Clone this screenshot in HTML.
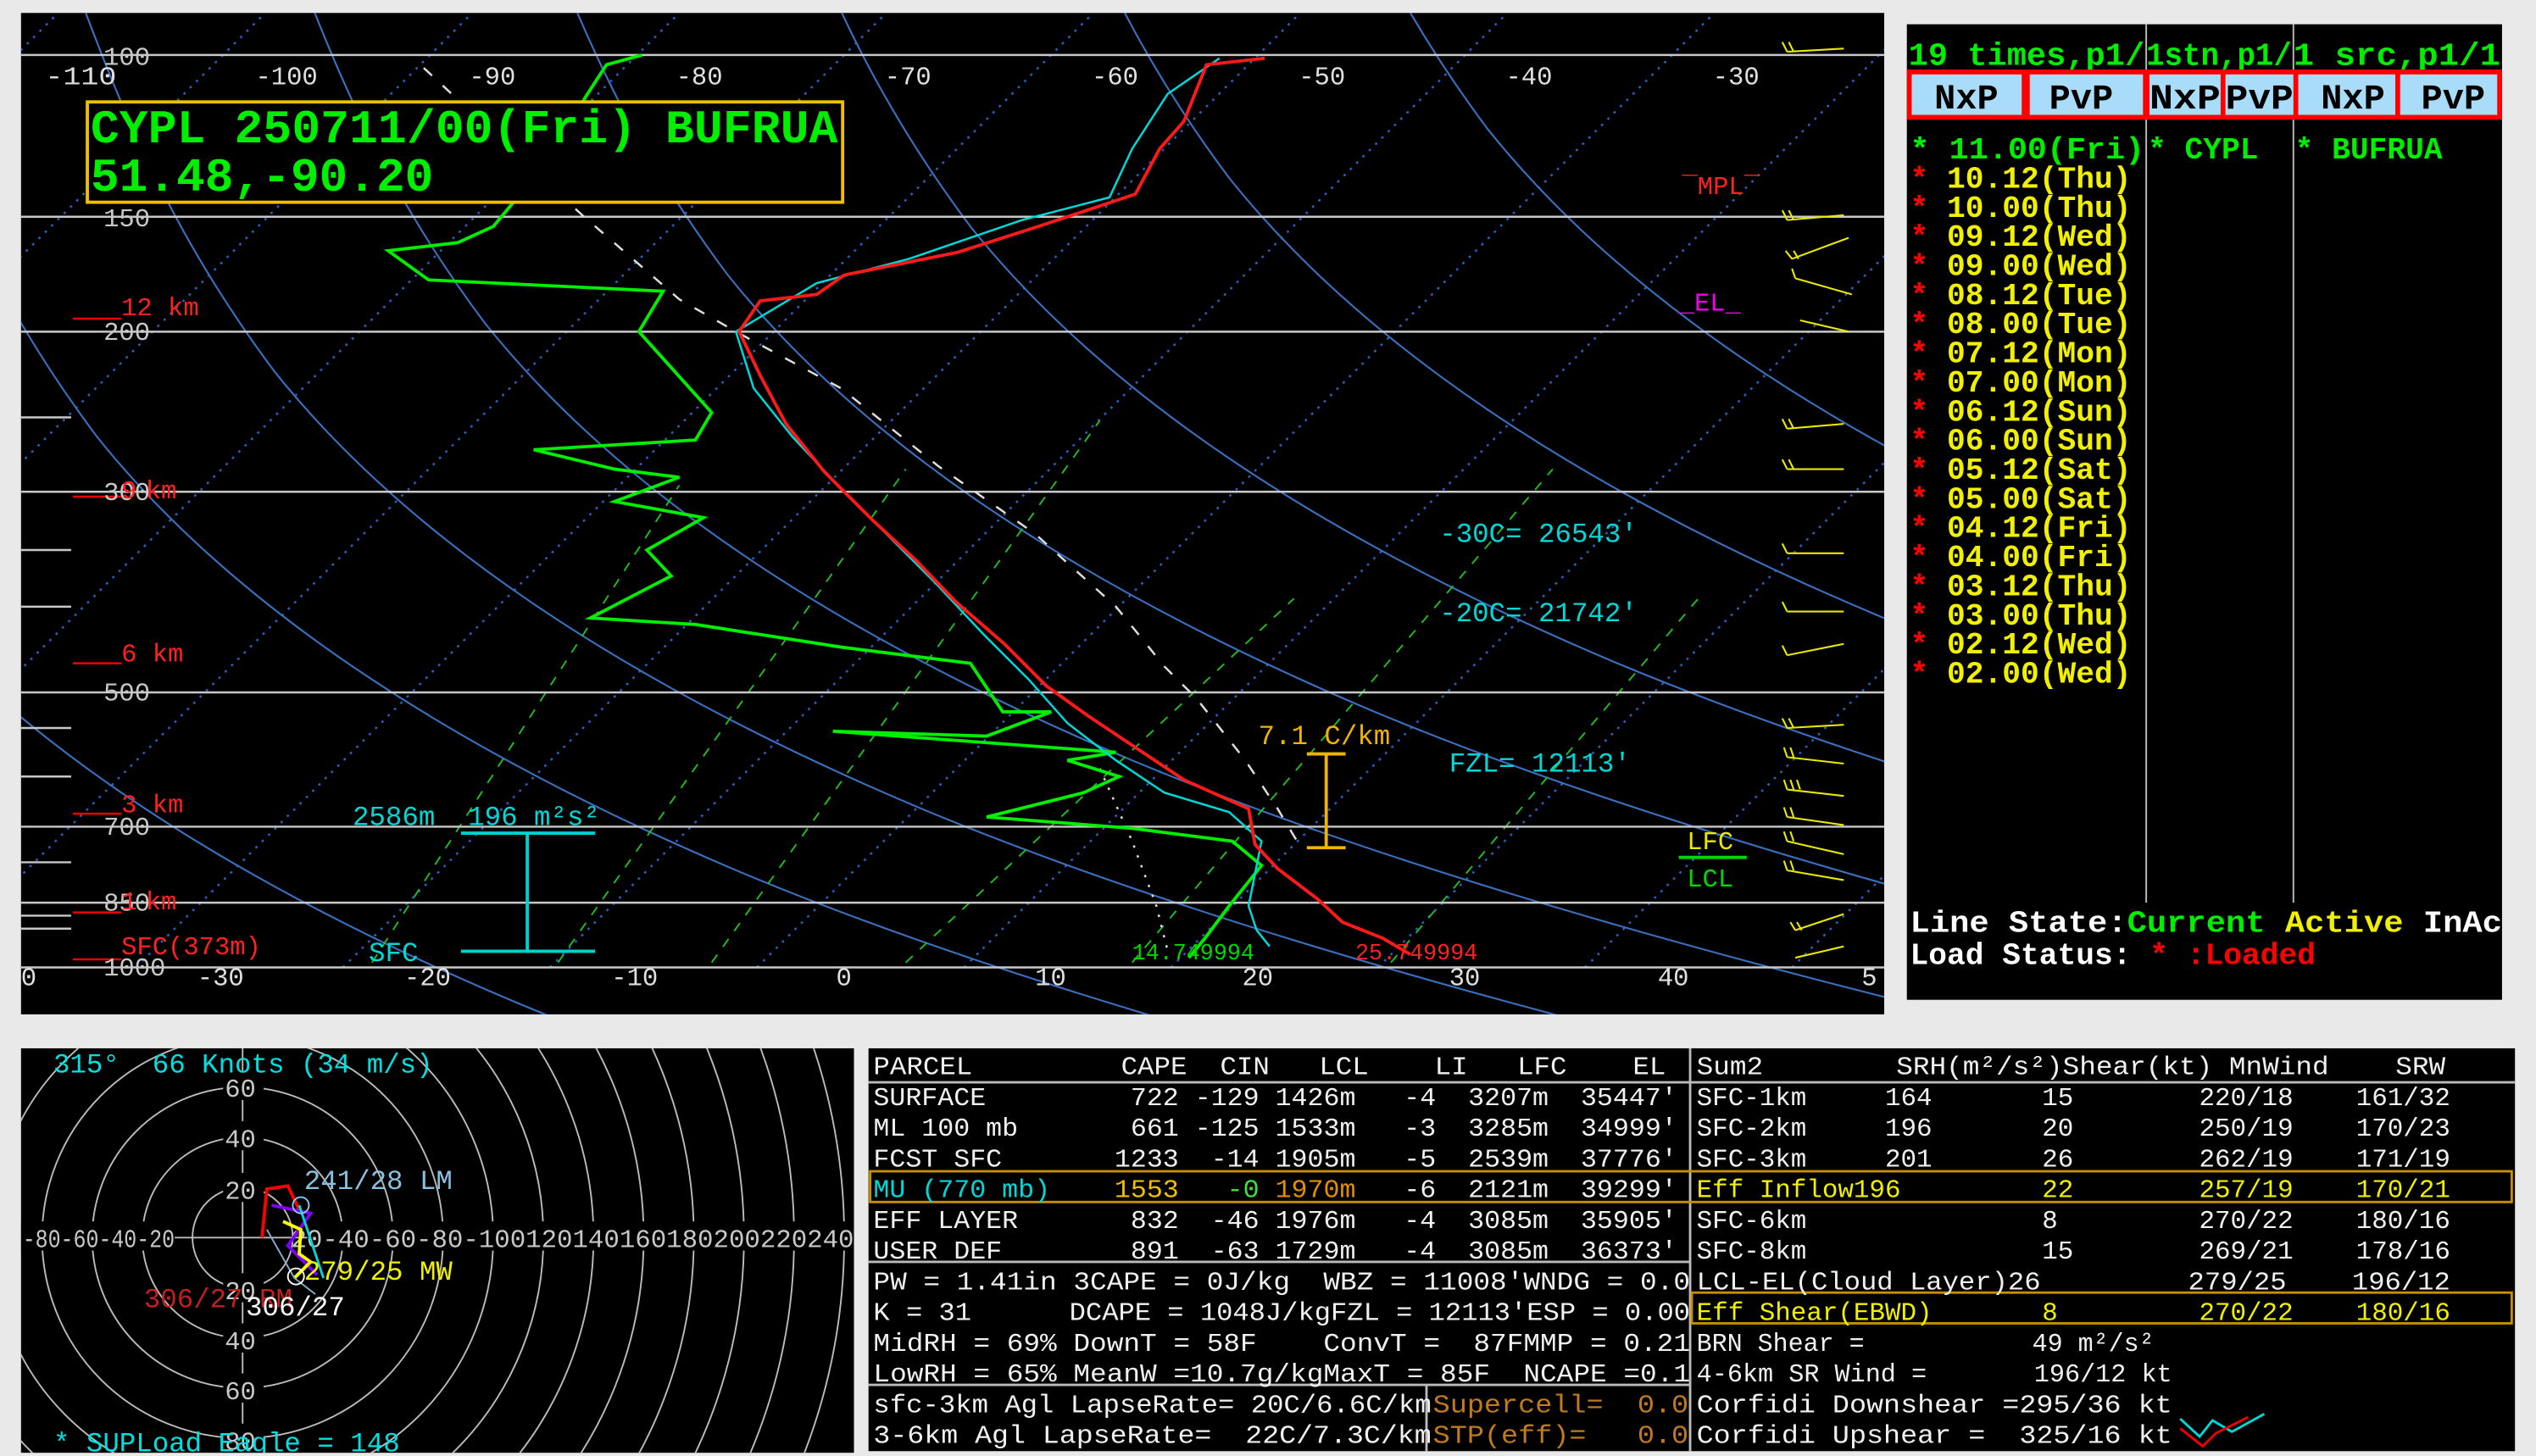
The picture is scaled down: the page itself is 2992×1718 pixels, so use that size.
<!DOCTYPE html>
<html><head><meta charset="utf-8"><style>
html,body{margin:0;padding:0;background:#e9e9e9;width:2992px;height:1718px;overflow:hidden;}
svg{display:block}
text{font-family:"Liberation Mono","DejaVu Sans Mono",monospace;white-space:pre;}
.c{font-family:"DejaVu Sans Mono","Liberation Mono",monospace;}
</style></head><body>
<svg width="2992" height="1718" viewBox="0 0 1568 900" preserveAspectRatio="none" xmlns="http://www.w3.org/2000/svg" xml:space="preserve">
<defs>
<clipPath id="sk"><rect x="13" y="8" width="1152" height="619"/></clipPath>
<clipPath id="hd"><rect x="13" y="648" width="515" height="250"/></clipPath>
<path id="ad" d="M0 0C30 80 60 150 120 230C200 330 330 420 520 500C640 550 800 600 1000 650" fill="none"/>
</defs>
<rect width="1568" height="900" fill="#e9e9e9"/>
<rect x="13" y="8" width="1152" height="619" fill="#000"/>
<g clip-path="url(#sk)">
 <g stroke="#2a5fc0" stroke-width="1.3" stroke-dasharray="1.5 4" fill="none">
  <path d="M-300 598L300 0M-172 598L428 0M-44 598L556 0M84 598L684 0M212 598L812 0M340 598L940 0M468 598L1068 0M596 598L1196 0M724 598L1324 0M852 598L1452 0M980 598L1580 0M1108 598L1708 0M1236 598L1836 0M-428 598L172 0M-556 598L44 0M-684 598L-84 0"/>
 </g>
 <g stroke="#3a70c0" stroke-width="1.1">
  <use href="#ad" x="-330" y="220"/>
  <use href="#ad" x="-200" y="120"/>
  <use href="#ad" x="-60" y="40"/>
  <use href="#ad" x="50" y="0"/>
  <use href="#ad" x="180" y="-30"/>
  <use href="#ad" x="330" y="-60"/>
  <use href="#ad" x="480" y="-90"/>
  <use href="#ad" x="640" y="-120"/>
  <use href="#ad" x="800" y="-150"/>
 </g>
 <g stroke="#1fbf1f" stroke-width="1" stroke-dasharray="6 6" fill="none">
  <path d="M230 595L420 300M345 595L560 290M440 595L680 260M560 595L800 370M700 595L960 290M860 595L1050 370"/>
 </g>
 <g stroke="#c8c8c8" stroke-width="1.3">
  <path d="M13 34H1165M13 134H1165M13 205H1165M13 304H1165M13 428H1165M13 511H1165M13 558H1165M13 598H1165"/>
  <path d="M13 258H44M13 340H44M13 375H44M13 450H44M13 480H44M13 533H44M13 574H44M13 566H44"/>
 </g>
 <g stroke="#e00" stroke-width="1.3"><path d="M45 197H75M45 307H75M45 410H75M45 503H75M45 564H75M45 593H75"/></g>
 <path d="M262 42L360 133L420 185L455 205L520 240L580 288L640 330L690 375L720 412L740 432L770 470L790 500L802 520" stroke="#ddd" stroke-width="1.3" fill="none" stroke-dasharray="7 9"/>
 <path d="M680 475L700 520L715 560L722 588" stroke="#ddd" stroke-width="1.3" fill="none" stroke-dasharray="1.5 5"/>
 <path d="M397 34L375 40L362 60L345 90L330 110L305 140L283 150L240 155L265 173L410 180L395 205L440 255L430 272L330 278L380 290L420 295L380 310L435 320L400 340L415 356L365 382L430 386L520 400L600 410L620 440L650 440L610 455L515 452L690 465L660 470L692 480L670 490L610 505L700 512L762 520L780 535L760 560L745 580L735 592" stroke="#00ee00" stroke-width="2" fill="none"/>
 <path d="M754 36L722 58L700 92L686 122L632 136L562 160L505 175L455 205L466 240L490 270L520 302L548 330L578 360L608 392L636 420L660 447L690 470L720 490L760 502L780 520L772 560L777 575L785 585" stroke="#00d8d8" stroke-width="1.3" fill="none"/>
 <path d="M782 36L746 40L732 75L717 92L702 120L642 140L592 156L522 170L505 182L470 186L457 205L470 232L486 262L510 292L540 322L566 346L591 372L621 398L647 424L672 442L702 462L732 482L772 500L776 522L790 537L815 556L830 570L855 580L872 590" stroke="#ff1a1a" stroke-width="2" fill="none"/>
 <g stroke="#e8e800" stroke-width="1.1" fill="none">
  <path d="M1105 32L1140 30M1105 32l-3-6M1109 32l-3-6"/>
  <path d="M1105 136L1140 133M1105 136l-3-6M1109 136l-3-6"/>
  <path d="M1108 160L1143 147M1108 160l-4-5M1112 160l-3-5"/>
  <path d="M1110 172L1145 182M1110 172l-2-6"/>
  <path d="M1113 198L1143 205"/>
  <path d="M1105 265L1140 262M1105 265l-3-6M1109 265l-3-6"/>
  <path d="M1105 290L1140 290M1105 290l-3-6M1109 290l-3-6"/>
  <path d="M1105 342L1140 342M1105 342l-3-6"/>
  <path d="M1105 378L1140 378M1105 378l-3-6"/>
  <path d="M1105 405L1140 398M1105 405l-3-6"/>
  <path d="M1105 450L1140 448M1105 450l-3-6M1109 450l-3-6"/>
  <path d="M1105 468L1140 472M1105 468l-2-6M1109 468l-2-6"/>
  <path d="M1105 488L1140 492M1105 488l-2-6M1109 488l-2-6M1113 488l-2-6"/>
  <path d="M1105 505L1140 510M1105 505l-2-6M1109 505l-2-6"/>
  <path d="M1105 520L1140 528M1105 520l-2-6M1109 520l-2-6"/>
  <path d="M1105 538L1140 544M1105 538l-2-6M1109 538l-2-6"/>
  <path d="M1110 575L1140 565M1110 575l-3-5M1114 575l-3-5"/>
  <path d="M1110 592L1140 585"/>
 </g>
 <path d="M808 466H832M820 466V524M808 524H832" stroke="#f0b400" stroke-width="2"/>
 <path d="M285 515H368M326 515V588M285 588H368" stroke="#00d0d0" stroke-width="2"/>
</g>
<g fill="#e0e0e0" font-size="16">
 <text x="28" y="52" textLength="44" lengthAdjust="spacingAndGlyphs">-110</text>
 <text x="158" y="52">-100</text><text x="290" y="52">-90</text><text x="418" y="52">-80</text><text x="547" y="52">-70</text><text x="675" y="52">-60</text><text x="803" y="52">-50</text><text x="931" y="52">-40</text><text x="1059" y="52">-30</text>
 <text x="122" y="609">-30</text><text x="250" y="609">-20</text><text x="378" y="609">-10</text><text x="517" y="609">0</text><text x="640" y="609">10</text><text x="768" y="609">20</text><text x="896" y="609">30</text><text x="1025" y="609">40</text><text x="1151" y="609">5</text><text x="13" y="609">0</text>
 <g fill="#c8c8c8"><text x="64" y="40">100</text><text x="64" y="140">150</text><text x="64" y="210">200</text><text x="64" y="309">300</text><text x="64" y="433">500</text><text x="64" y="516">700</text><text x="64" y="563">850</text><text x="64" y="603">1000</text></g>
</g>
<g fill="#ff2020" font-size="16">
 <text x="75" y="195">12 km</text><text x="75" y="308">9</text><text x="90" y="308">km</text><text x="75" y="409">6 km</text><text x="75" y="502">3 km</text><text x="75" y="562">1</text><text x="90" y="562">km</text><text x="75" y="590">SFC(373m)</text>
 <text x="1040" y="120">‾MPL‾</text>
 <text x="838" y="593" font-size="14">25.749994</text>
</g>
<text x="1038" y="192" fill="#ee00ee" font-size="16">_EL_</text>
<g fill="#00d8d8" font-size="17">
 <text x="890" y="335">-30C= 26543'</text><text x="890" y="384">-20C= 21742'</text><text x="896" y="477">FZL= 12113'</text>
 <text x="218" y="510">2586m  196 m²s²</text><text x="228" y="594">SFC</text>
</g>
<text x="778" y="460" fill="#f0b400" font-size="17">7.1 C/km</text>
<text x="700" y="593" fill="#00d800" font-size="14">14.749994</text>
<text x="1043" y="525" fill="#e8e800" font-size="16">LFC</text>
<path d="M1038 530H1080" stroke="#00d800" stroke-width="2"/>
<text x="1043" y="548" fill="#00d800" font-size="16">LCL</text>
<rect x="54" y="63" width="467" height="62" fill="#000" stroke="#f0c000" stroke-width="2"/>
<g fill="#00ee00" font-size="29" font-weight="bold">
 <text x="56" y="88" textLength="462" lengthAdjust="spacingAndGlyphs">CYPL 250711/00(Fri) BUFRUA</text>
 <text x="56" y="118" textLength="212" lengthAdjust="spacingAndGlyphs">51.48,-90.20</text>
</g>
<rect x="1179" y="15" width="368" height="603" fill="#000"/>
<path d="M1327 15V558M1418 15V558" stroke="#bbb" stroke-width="1"/>
<g fill="#00ee00" font-size="20" font-weight="bold">
 <text x="1180" y="40" textLength="146" lengthAdjust="spacingAndGlyphs">19 times,p1/</text>
 <text x="1327" y="40" textLength="90" lengthAdjust="spacingAndGlyphs">1stn,p1/</text>
 <text x="1418" y="40" textLength="128" lengthAdjust="spacingAndGlyphs">1 src,p1/1</text>
</g>
<rect x="1179" y="43" width="368" height="31" fill="#f00"/>
<g fill="#a8dcf8">
 <rect x="1182" y="46" width="68" height="25"/><rect x="1255" y="46" width="70" height="25"/>
 <rect x="1329" y="46" width="44" height="25"/><rect x="1376" y="46" width="42" height="25"/>
 <rect x="1421" y="46" width="60" height="25"/><rect x="1484" y="46" width="60" height="25"/>
</g>
<g fill="#000" font-size="22" font-weight="bold">
 <text x="1196" y="67">NxP</text><text x="1267" y="67">PvP</text><text x="1329" y="67" textLength="44" lengthAdjust="spacingAndGlyphs">NxP</text><text x="1376" y="67" textLength="42" lengthAdjust="spacingAndGlyphs">PvP</text><text x="1435" y="67">NxP</text><text x="1497" y="67">PvP</text>
</g>
<g font-size="19" font-weight="bold">
 <text x="1181" y="98" fill="#00ee00" textLength="145" lengthAdjust="spacingAndGlyphs">* 11.00(Fri)</text>
 <text x="1328" y="98" fill="#00ee00">* CYPL</text>
 <text x="1419" y="98" fill="#00ee00">* BUFRUA</text>
</g>
<g font-size="19" font-weight="bold" fill="#f0f000">
 <text x="1181" y="116"><tspan fill="#f00">*</tspan> 10.12(Thu)</text>
 <text x="1181" y="134"><tspan fill="#f00">*</tspan> 10.00(Thu)</text>
 <text x="1181" y="152"><tspan fill="#f00">*</tspan> 09.12(Wed)</text>
 <text x="1181" y="170"><tspan fill="#f00">*</tspan> 09.00(Wed)</text>
 <text x="1181" y="188"><tspan fill="#f00">*</tspan> 08.12(Tue)</text>
 <text x="1181" y="206"><tspan fill="#f00">*</tspan> 08.00(Tue)</text>
 <text x="1181" y="224"><tspan fill="#f00">*</tspan> 07.12(Mon)</text>
 <text x="1181" y="242"><tspan fill="#f00">*</tspan> 07.00(Mon)</text>
 <text x="1181" y="260"><tspan fill="#f00">*</tspan> 06.12(Sun)</text>
 <text x="1181" y="278"><tspan fill="#f00">*</tspan> 06.00(Sun)</text>
 <text x="1181" y="296"><tspan fill="#f00">*</tspan> 05.12(Sat)</text>
 <text x="1181" y="314"><tspan fill="#f00">*</tspan> 05.00(Sat)</text>
 <text x="1181" y="332"><tspan fill="#f00">*</tspan> 04.12(Fri)</text>
 <text x="1181" y="350"><tspan fill="#f00">*</tspan> 04.00(Fri)</text>
 <text x="1181" y="368"><tspan fill="#f00">*</tspan> 03.12(Thu)</text>
 <text x="1181" y="386"><tspan fill="#f00">*</tspan> 03.00(Thu)</text>
 <text x="1181" y="404"><tspan fill="#f00">*</tspan> 02.12(Wed)</text>
 <text x="1181" y="422"><tspan fill="#f00">*</tspan> 02.00(Wed)</text>
</g>
<g font-size="19" font-weight="bold">
 <text x="1181" y="576" fill="#fff" textLength="366" lengthAdjust="spacingAndGlyphs">Line State:<tspan fill="#00ee00">Current</tspan> <tspan fill="#f0f000">Active</tspan> InAc</text>
 <text x="1181" y="596" fill="#fff">Load Status: <tspan fill="#f00">* :Loaded</tspan></text>
</g>
<rect x="13" y="648" width="515" height="250" fill="#000"/>
<g clip-path="url(#hd)">
 <g stroke="#bbb" stroke-width="1" fill="none">
  <circle cx="150" cy="765" r="31"/><circle cx="150" cy="765" r="62"/><circle cx="150" cy="765" r="93"/><circle cx="150" cy="765" r="124"/><circle cx="150" cy="765" r="155"/><circle cx="150" cy="765" r="186"/><circle cx="150" cy="765" r="217"/><circle cx="150" cy="765" r="248"/><circle cx="150" cy="765" r="279"/><circle cx="150" cy="765" r="310"/><circle cx="150" cy="765" r="341"/><circle cx="150" cy="765" r="372"/><circle cx="150" cy="765" r="403"/>
  <path d="M13 765H528M150 648V898"/>
 </g>
 <g fill="#c8c8c8" font-size="16" class="c">
  <rect x="138" y="662" width="25" height="18" fill="#000"/><text x="139" y="678">60</text>
  <rect x="138" y="693" width="25" height="18" fill="#000"/><text x="139" y="709">40</text>
  <rect x="138" y="725" width="25" height="18" fill="#000"/><text x="139" y="741">20</text>
  <rect x="138" y="787" width="25" height="18" fill="#000"/><text x="139" y="803">20</text>
  <rect x="138" y="818" width="25" height="18" fill="#000"/><text x="139" y="834">40</text>
  <rect x="138" y="849" width="25" height="18" fill="#000"/><text x="139" y="865">60</text>
  <rect x="138" y="880" width="25" height="18" fill="#000"/><text x="139" y="896">80</text>
  <rect x="13" y="755" width="95" height="18" fill="#000"/><text x="14" y="771" textLength="94" lengthAdjust="spacingAndGlyphs">-80-60-40-20</text>
  <rect x="190" y="755" width="338" height="18" fill="#000"/><text x="180" y="771" textLength="348" lengthAdjust="spacingAndGlyphs">20-40-60-80-100120140160180200220240</text>
 </g>
 <path d="M162 765L165 735L178 733L186 750" stroke="#f00" stroke-width="2" fill="none"/>
 <path d="M168 745L192 750L178 770L196 788" stroke="#8000ff" stroke-width="2" fill="none"/>
 <path d="M175 755L186 760L185 775L192 780L182 790" stroke="#ff0" stroke-width="2" fill="none"/>
 <path d="M185 745L200 790" stroke="#00d8d8" stroke-width="1.5" fill="none"/>
 <path d="M165 760L182 790L195 800" stroke="#8ac" stroke-width="1" fill="none"/>
 <circle cx="186" cy="745" r="5" stroke="#8cf" fill="none"/><circle cx="183" cy="789" r="5" stroke="#fff" fill="none"/>
 <g font-size="17" class="c">
  <text x="33" y="663" fill="#00e0e0">315°  66 Knots (34 m/s)</text>
  <text x="188" y="735" fill="#88c0e0">241/28 LM</text>
  <text x="188" y="791" fill="#f0f000">279/25 MW</text>
  <text x="89" y="808" fill="#c02020">306/27 RM</text>
  <text x="152" y="813" fill="#fff">306/27</text>
  <text x="33" y="897" fill="#00e0e0">* SUPLoad Eagle = 148</text>
 </g>
</g>
<rect x="537" y="648" width="1018" height="249" fill="#000"/>
<g stroke="#bbb" stroke-width="1.5" fill="none">
 <path d="M537 669H1555M537 780H1045M537 856H1045M1045 648V897M882 856V897"/>
</g>
<rect x="538" y="724" width="1015" height="19" fill="none" stroke="#c89000" stroke-width="1.5"/>
<rect x="1046" y="799" width="507" height="19" fill="none" stroke="#c89000" stroke-width="1.5"/>
<g font-size="16" fill="#f0f0f0" class="c">
 <text x="540" y="664" textLength="490" lengthAdjust="spacingAndGlyphs">PARCEL         CAPE  CIN   LCL    LI   LFC    EL</text>
 <text x="540" y="683" textLength="497" lengthAdjust="spacingAndGlyphs">SURFACE         722 -129 1426m   -4  3207m  35447'</text>
 <text x="540" y="702" textLength="497" lengthAdjust="spacingAndGlyphs">ML 100 mb       661 -125 1533m   -3  3285m  34999'</text>
 <text x="540" y="721" textLength="497" lengthAdjust="spacingAndGlyphs">FCST SFC       1233  -14 1905m   -5  2539m  37776'</text>
 <text x="540" y="740" textLength="497" lengthAdjust="spacingAndGlyphs"><tspan fill="#00d8d8">MU (770 mb)</tspan>    <tspan fill="#f0c000">1553</tspan>   <tspan fill="#40e040">-0</tspan> <tspan fill="#e09000">1970m</tspan>   -6  2121m  39299'</text>
 <text x="540" y="759" textLength="497" lengthAdjust="spacingAndGlyphs">EFF LAYER       832  -46 1976m   -4  3085m  35905'</text>
 <text x="540" y="778" textLength="497" lengthAdjust="spacingAndGlyphs">USER DEF        891  -63 1729m   -4  3085m  36373'</text>
 <text x="540" y="797" textLength="505" lengthAdjust="spacingAndGlyphs">PW = 1.41in 3CAPE = 0J/kg  WBZ = 11008'WNDG = 0.0</text>
 <text x="540" y="816" textLength="505" lengthAdjust="spacingAndGlyphs">K = 31      DCAPE = 1048J/kgFZL = 12113'ESP = 0.00</text>
 <text x="540" y="835" textLength="505" lengthAdjust="spacingAndGlyphs">MidRH = 69% DownT = 58F    ConvT =  87FMMP = 0.21</text>
 <text x="540" y="854" textLength="505" lengthAdjust="spacingAndGlyphs">LowRH = 65% MeanW =10.7g/kgMaxT = 85F  NCAPE =0.1</text>
 <text x="540" y="873" textLength="345" lengthAdjust="spacingAndGlyphs">sfc-3km Agl LapseRate= 20C/6.6C/km</text>
 <text x="540" y="892" textLength="345" lengthAdjust="spacingAndGlyphs">3-6km Agl LapseRate=  22C/7.3C/km</text>
 <text x="886" y="873" fill="#c07a20" textLength="158" lengthAdjust="spacingAndGlyphs">Supercell=  0.0</text>
 <text x="886" y="892" fill="#c07a20" textLength="158" lengthAdjust="spacingAndGlyphs">STP(eff)=   0.0</text>
 <text x="1049" y="664" textLength="463" lengthAdjust="spacingAndGlyphs">Sum2        SRH(m²/s²)Shear(kt) MnWind    SRW</text>
 <text x="1049" y="683" textLength="466" lengthAdjust="spacingAndGlyphs">SFC-1km     164       15        220/18    161/32</text>
 <text x="1049" y="702" textLength="466" lengthAdjust="spacingAndGlyphs">SFC-2km     196       20        250/19    170/23</text>
 <text x="1049" y="721" textLength="466" lengthAdjust="spacingAndGlyphs">SFC-3km     201       26        262/19    171/19</text>
 <text x="1049" y="740" textLength="466" lengthAdjust="spacingAndGlyphs" fill="#f0f000">Eff Inflow196         22        257/19    170/21</text>
 <text x="1049" y="759" textLength="466" lengthAdjust="spacingAndGlyphs">SFC-6km               8         270/22    180/16</text>
 <text x="1049" y="778" textLength="466" lengthAdjust="spacingAndGlyphs">SFC-8km               15        269/21    178/16</text>
 <text x="1049" y="797" textLength="466" lengthAdjust="spacingAndGlyphs">LCL-EL(Cloud Layer)26         279/25    196/12</text>
 <text x="1049" y="816" textLength="466" lengthAdjust="spacingAndGlyphs" fill="#f0f000">Eff Shear(EBWD)       8         270/22    180/16</text>
 <text x="1049" y="835" textLength="283" lengthAdjust="spacingAndGlyphs">BRN Shear =           49 m²/s²</text>
 <text x="1049" y="854" textLength="294" lengthAdjust="spacingAndGlyphs">4-6km SR Wind =       196/12 kt</text>
 <text x="1049" y="873" textLength="294" lengthAdjust="spacingAndGlyphs">Corfidi Downshear =295/36 kt</text>
 <text x="1049" y="892" textLength="294" lengthAdjust="spacingAndGlyphs">Corfidi Upshear =  325/16 kt</text>
</g>
<path d="M1348 877L1360 888L1368 878L1380 885L1400 874" stroke="#00d8d8" stroke-width="1.5" fill="none"/>
<path d="M1348 883L1362 894L1370 886L1390 876" stroke="#e00" stroke-width="1.5" fill="none"/>
</svg>
</body></html>
